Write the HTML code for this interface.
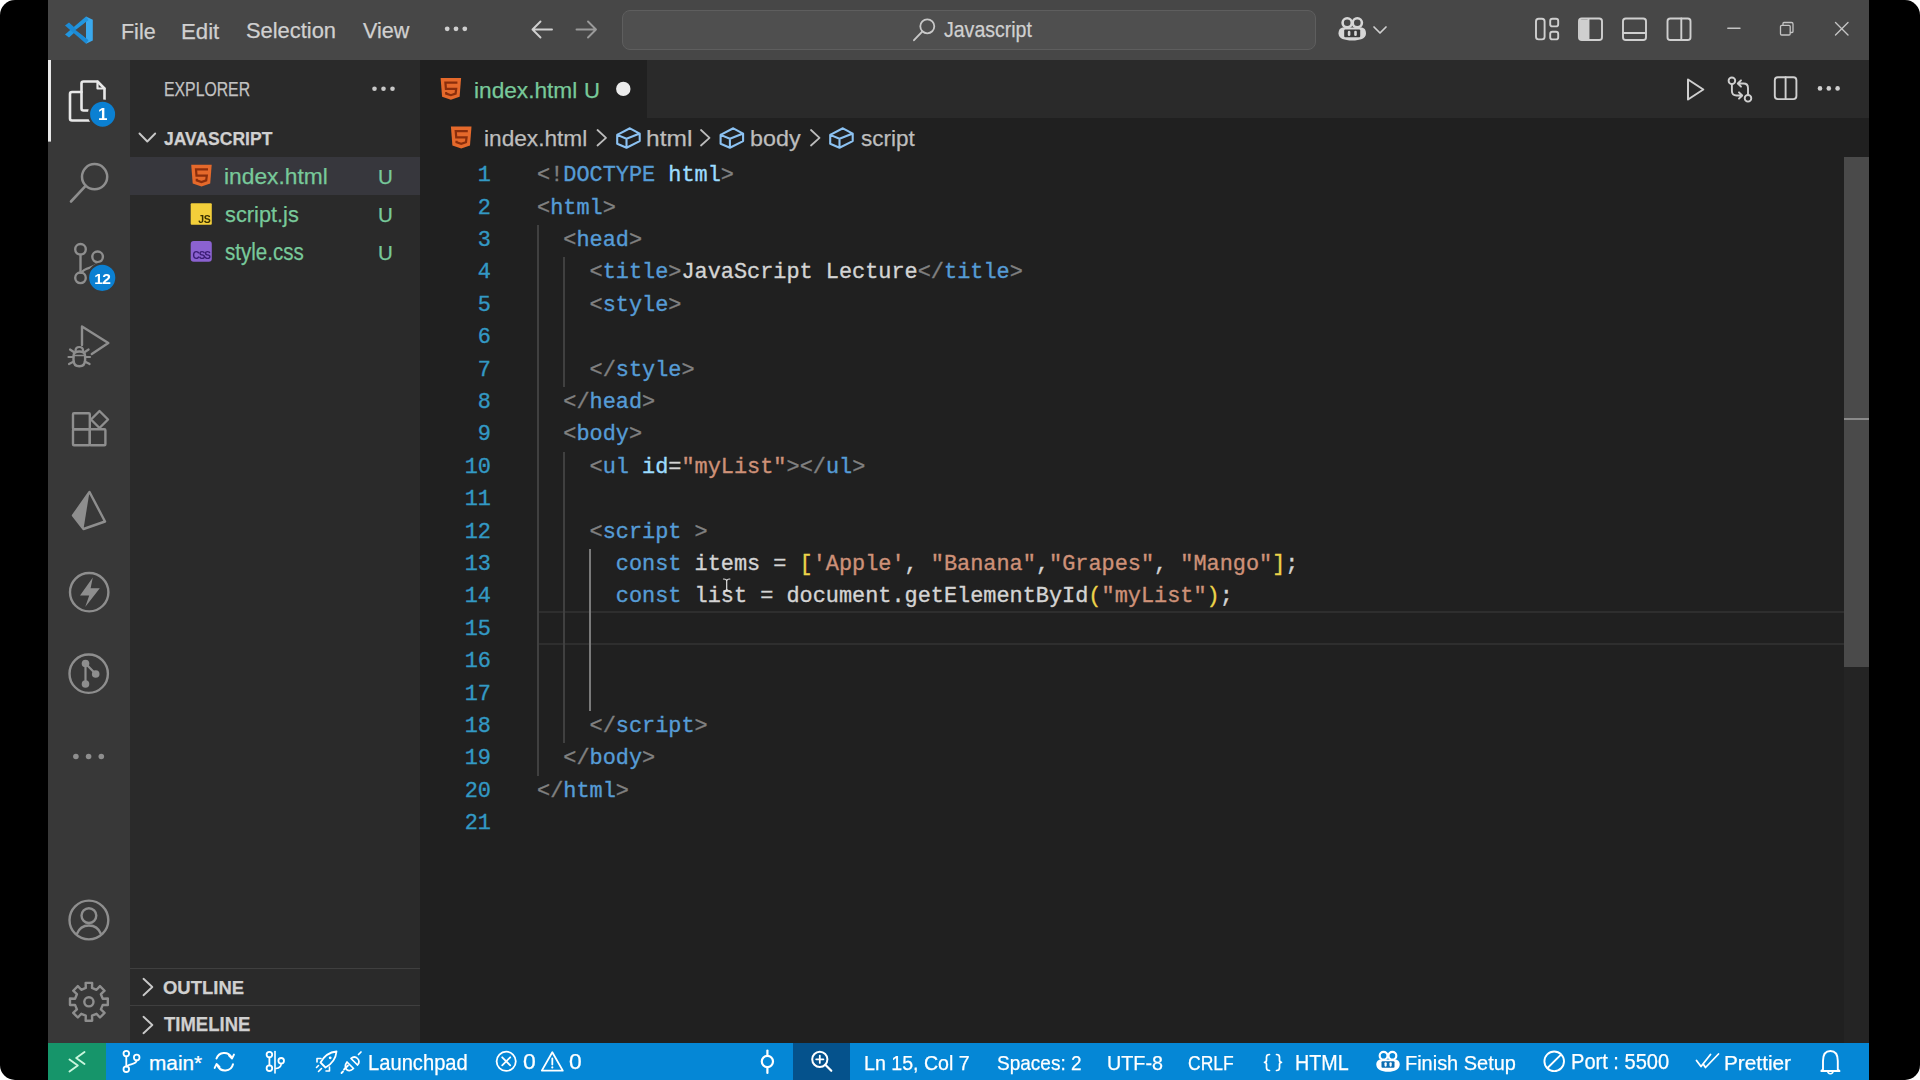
<!DOCTYPE html>
<html><head><meta charset="utf-8">
<style>
*{margin:0;padding:0;box-sizing:border-box}
html,body{width:1920px;height:1080px;overflow:hidden;background:#fff}
body{position:relative;font-family:"Liberation Sans",sans-serif}
.a{position:absolute}
.t{position:absolute;line-height:1;white-space:pre;transform-origin:0 0;-webkit-text-stroke:0.25px currentColor;font-family:"Liberation Sans",sans-serif}
.code{position:absolute;font-family:"Liberation Mono",monospace;font-size:21.88px;line-height:32.40px;white-space:pre;color:#d4d4d4;-webkit-text-stroke:0.35px currentColor}
.ln{position:absolute;font-family:"Liberation Mono",monospace;font-size:21.88px;line-height:32.40px;color:#3399c4;text-align:right;left:431px;width:60px;-webkit-text-stroke:0.35px currentColor}
.guide{position:absolute;width:2px;background:#404040}
.sep{position:absolute;height:1px;background:#3f3f3f}
svg{position:absolute;left:0;top:0}
</style></head><body><div style="position:absolute;left:0;top:0;width:1920px;height:1080px;filter:blur(0.5px)">
<div class="a" style="left:0px;top:0px;width:1920px;height:1080px;background:#000;border-radius:15px"></div><div class="a" style="left:48px;top:0px;width:1821px;height:60px;background:#474747;"></div><div class="a" style="left:48px;top:60px;width:82px;height:983px;background:#383838;"></div><div class="a" style="left:130px;top:60px;width:290px;height:983px;background:#2a2a2a;"></div><div class="a" style="left:420px;top:60px;width:1449px;height:983px;background:#202020;"></div><div class="a" style="left:420px;top:60px;width:1449px;height:58px;background:#2a2a2a;"></div><div class="a" style="left:420px;top:60px;width:227px;height:58px;background:#202020;"></div><div class="a" style="left:48px;top:1043px;width:1821px;height:37px;background:#0587d6;"></div><div class="a" style="left:48px;top:1043px;width:58px;height:37px;background:#16956a;"></div><div class="a" style="left:793px;top:1043px;width:57px;height:37px;background:#05528c;"></div><div class="a" style="left:130px;top:157px;width:290px;height:38px;background:#37373d;"></div><div class="a" style="left:622px;top:10px;width:694px;height:40px;border-radius:8px;background:#4f4f4f;border:1.5px solid #5e5e5e"></div><div class="sep" style="left:130px;top:968px;width:290px"></div><div class="sep" style="left:130px;top:1005px;width:290px"></div><div class="a" style="left:538px;top:611px;width:1306px;height:34px;border-top:2px solid #2e2e2e;border-bottom:2px solid #2e2e2e"></div><div class="guide" style="left:537px;top:225.0px;height:550.8px"></div><div class="guide" style="left:563px;top:257.4px;height:129.6px"></div><div class="guide" style="left:563px;top:451.8px;height:291.6px"></div><div class="guide" style="left:589px;top:549.0px;height:162.0px;background:#7a7a7a"></div><div class="t" style="left:120.98px;top:20.66px;font-size:21.66px;transform:scaleX(0.9920);color:#d0d0d0;">File</div><div class="t" style="left:181.12px;top:20.66px;font-size:21.66px;transform:scaleX(1.0252);color:#d0d0d0;">Edit</div><div class="t" style="left:246.02px;top:20.31px;font-size:22.07px;transform:scaleX(0.9911);color:#d0d0d0;">Selection</div><div class="t" style="left:362.79px;top:20.31px;font-size:22.07px;transform:scaleX(0.9781);color:#d0d0d0;">View</div><div class="t" style="left:943.91px;top:19.81px;font-size:21.24px;transform:scaleX(0.9195);color:#d0d0d0;">Javascript</div><div class="t" style="left:163.73px;top:80.41px;font-size:19.71px;transform:scaleX(0.8028);color:#c2c2c2;">EXPLORER</div><div class="t" style="left:163.94px;top:128.91px;font-size:19.00px;transform:scaleX(0.9219);color:#d0d0d0;font-weight:bold;">JAVASCRIPT</div><div class="t" style="left:223.82px;top:165.96px;font-size:22.48px;transform:scaleX(1.0132);color:#78c99a;">index.html</div><div class="t" style="left:224.95px;top:203.56px;font-size:22.48px;transform:scaleX(0.9698);color:#78c99a;">script.js</div><div class="t" style="left:224.98px;top:240.68px;font-size:23.17px;transform:scaleX(0.8883);color:#78c99a;">style.css</div><div class="t" style="left:378.46px;top:167.81px;font-size:19.71px;transform:scaleX(1.0414);color:#78c99a;">U</div><div class="t" style="left:378.46px;top:205.81px;font-size:19.71px;transform:scaleX(1.0414);color:#78c99a;">U</div><div class="t" style="left:378.46px;top:243.81px;font-size:19.71px;transform:scaleX(1.0414);color:#78c99a;">U</div><div class="t" style="left:163.26px;top:977.61px;font-size:19.00px;transform:scaleX(0.9720);color:#d0d0d0;font-weight:bold;">OUTLINE</div><div class="t" style="left:163.81px;top:1015.19px;font-size:19.86px;transform:scaleX(0.9321);color:#d0d0d0;font-weight:bold;">TIMELINE</div><div class="t" style="left:474.03px;top:79.21px;font-size:22.90px;transform:scaleX(0.9900);color:#78c99a;">index.html</div><div class="t" style="left:584.44px;top:79.70px;font-size:22.32px;transform:scaleX(0.9904);color:#78c99a;">U</div><div class="t" style="left:484.33px;top:128.00px;font-size:22.21px;transform:scaleX(1.0207);color:#bdbdbd;">index.html</div><div class="t" style="left:645.88px;top:127.86px;font-size:22.48px;transform:scaleX(1.0929);color:#bdbdbd;">html</div><div class="t" style="left:750.28px;top:127.86px;font-size:22.48px;transform:scaleX(1.0375);color:#bdbdbd;">body</div><div class="t" style="left:860.62px;top:128.33px;font-size:21.93px;transform:scaleX(1.0264);color:#bdbdbd;">script</div><div class="t" style="left:148.95px;top:1052.90px;font-size:20.55px;transform:scaleX(1.0124);color:#ffffff;">main*</div><div class="t" style="left:367.89px;top:1052.78px;font-size:21.52px;transform:scaleX(0.9372);color:#ffffff;">Launchpad</div><div class="t" style="left:523.28px;top:1052.28px;font-size:21.29px;transform:scaleX(1.0766);color:#ffffff;">0</div><div class="t" style="left:569.39px;top:1052.28px;font-size:21.29px;transform:scaleX(1.0717);color:#ffffff;">0</div><div class="t" style="left:864.03px;top:1053.25px;font-size:20.14px;transform:scaleX(0.9738);color:#ffffff;">Ln 15, Col 7</div><div class="t" style="left:996.64px;top:1052.64px;font-size:20.86px;transform:scaleX(0.9115);color:#ffffff;">Spaces: 2</div><div class="t" style="left:1106.82px;top:1052.64px;font-size:20.86px;transform:scaleX(0.9465);color:#ffffff;">UTF-8</div><div class="t" style="left:1188.33px;top:1052.64px;font-size:20.86px;transform:scaleX(0.8390);color:#ffffff;">CRLF</div><div class="t" style="left:1295.32px;top:1052.01px;font-size:21.59px;transform:scaleX(0.9138);color:#ffffff;">HTML</div><div class="t" style="left:1404.65px;top:1052.90px;font-size:20.55px;transform:scaleX(0.9709);color:#ffffff;">Finish Setup</div><div class="t" style="left:1570.89px;top:1052.25px;font-size:21.43px;transform:scaleX(0.9363);color:#ffffff;">Port : 5500</div><div class="t" style="left:1724.14px;top:1052.88px;font-size:20.69px;transform:scaleX(1.0053);color:#ffffff;">Prettier</div><div class="ln" style="top:160.18px">1</div><div class="code" style="left:537.0px;top:160.18px"><span style="color:#808080">&lt;!</span><span style="color:#569cd6">DOCTYPE</span><span style="color:#d4d4d4"> </span><span style="color:#9cdcfe">html</span><span style="color:#808080">&gt;</span></div><div class="ln" style="top:192.58px">2</div><div class="code" style="left:537.0px;top:192.58px"><span style="color:#808080">&lt;</span><span style="color:#569cd6">html</span><span style="color:#808080">&gt;</span></div><div class="ln" style="top:224.98px">3</div><div class="code" style="left:537.0px;top:224.98px"><span style="color:#d4d4d4">  </span><span style="color:#808080">&lt;</span><span style="color:#569cd6">head</span><span style="color:#808080">&gt;</span></div><div class="ln" style="top:257.38px">4</div><div class="code" style="left:537.0px;top:257.38px"><span style="color:#d4d4d4">    </span><span style="color:#808080">&lt;</span><span style="color:#569cd6">title</span><span style="color:#808080">&gt;</span><span style="color:#d4d4d4">JavaScript Lecture</span><span style="color:#808080">&lt;/</span><span style="color:#569cd6">title</span><span style="color:#808080">&gt;</span></div><div class="ln" style="top:289.78px">5</div><div class="code" style="left:537.0px;top:289.78px"><span style="color:#d4d4d4">    </span><span style="color:#808080">&lt;</span><span style="color:#569cd6">style</span><span style="color:#808080">&gt;</span></div><div class="ln" style="top:322.18px">6</div><div class="ln" style="top:354.58px">7</div><div class="code" style="left:537.0px;top:354.58px"><span style="color:#d4d4d4">    </span><span style="color:#808080">&lt;/</span><span style="color:#569cd6">style</span><span style="color:#808080">&gt;</span></div><div class="ln" style="top:386.98px">8</div><div class="code" style="left:537.0px;top:386.98px"><span style="color:#d4d4d4">  </span><span style="color:#808080">&lt;/</span><span style="color:#569cd6">head</span><span style="color:#808080">&gt;</span></div><div class="ln" style="top:419.38px">9</div><div class="code" style="left:537.0px;top:419.38px"><span style="color:#d4d4d4">  </span><span style="color:#808080">&lt;</span><span style="color:#569cd6">body</span><span style="color:#808080">&gt;</span></div><div class="ln" style="top:451.78px">10</div><div class="code" style="left:537.0px;top:451.78px"><span style="color:#d4d4d4">    </span><span style="color:#808080">&lt;</span><span style="color:#569cd6">ul</span><span style="color:#d4d4d4"> </span><span style="color:#9cdcfe">id</span><span style="color:#d4d4d4">=</span><span style="color:#ce9178">&quot;myList&quot;</span><span style="color:#808080">&gt;</span><span style="color:#808080">&lt;/</span><span style="color:#569cd6">ul</span><span style="color:#808080">&gt;</span></div><div class="ln" style="top:484.18px">11</div><div class="ln" style="top:516.58px">12</div><div class="code" style="left:537.0px;top:516.58px"><span style="color:#d4d4d4">    </span><span style="color:#808080">&lt;</span><span style="color:#569cd6">script</span><span style="color:#808080"> &gt;</span></div><div class="ln" style="top:548.98px">13</div><div class="code" style="left:537.0px;top:548.98px"><span style="color:#d4d4d4">      </span><span style="color:#569cd6">const</span><span style="color:#d4d4d4"> items = </span><span style="color:#edd44a">[</span><span style="color:#ce9178">&#x27;Apple&#x27;</span><span style="color:#d4d4d4">, </span><span style="color:#ce9178">&quot;Banana&quot;</span><span style="color:#d4d4d4">,</span><span style="color:#ce9178">&quot;Grapes&quot;</span><span style="color:#d4d4d4">, </span><span style="color:#ce9178">&quot;Mango&quot;</span><span style="color:#edd44a">]</span><span style="color:#d4d4d4">;</span></div><div class="ln" style="top:581.38px">14</div><div class="code" style="left:537.0px;top:581.38px"><span style="color:#d4d4d4">      </span><span style="color:#569cd6">const</span><span style="color:#d4d4d4"> list = document.getElementById</span><span style="color:#edd44a">(</span><span style="color:#ce9178">&quot;myList&quot;</span><span style="color:#edd44a">)</span><span style="color:#d4d4d4">;</span></div><div class="ln" style="top:613.78px">15</div><div class="ln" style="top:646.18px">16</div><div class="ln" style="top:678.58px">17</div><div class="ln" style="top:710.98px">18</div><div class="code" style="left:537.0px;top:710.98px"><span style="color:#d4d4d4">    </span><span style="color:#808080">&lt;/</span><span style="color:#569cd6">script</span><span style="color:#808080">&gt;</span></div><div class="ln" style="top:743.38px">19</div><div class="code" style="left:537.0px;top:743.38px"><span style="color:#d4d4d4">  </span><span style="color:#808080">&lt;/</span><span style="color:#569cd6">body</span><span style="color:#808080">&gt;</span></div><div class="ln" style="top:775.78px">20</div><div class="code" style="left:537.0px;top:775.78px"><span style="color:#808080">&lt;/</span><span style="color:#569cd6">html</span><span style="color:#808080">&gt;</span></div><div class="ln" style="top:808.18px">21</div><div class="a" style="left:1844px;top:157px;width:25px;height:510px;background:#4a4a4a"></div><div class="a" style="left:1844px;top:667px;width:25px;height:376px;background:#242424"></div><div class="a" style="left:1844px;top:418px;width:25px;height:2px;background:#8a8a8a"></div><svg width="1920" height="1080" viewBox="0 0 1920 1080" fill="none" stroke-linecap="round" stroke-linejoin="round"><g>
<path d="M86 16.5 L92.8 19.8 L92.8 40.5 L86 43.8 Z" fill="#3aa9ee"/>
<path d="M86 16.5 L88.5 20 L69 37.5 L65 34.5 Z" fill="#2196e0"/>
<path d="M86 43.8 L88.5 40.3 L69 22.5 L65 25.5 Z" fill="#1c8bd6"/>
<path d="M86 22 L86 38 L75.5 30 Z" fill="#474747"/>
</g>
<circle cx="447.2" cy="28.8" r="2.4" fill="#cfcfcf"/>
<circle cx="456" cy="28.8" r="2.4" fill="#cfcfcf"/>
<circle cx="464.8" cy="28.8" r="2.4" fill="#cfcfcf"/>
<path d="M552 29.5 H532.5 M540.5 21.5 L532.5 29.5 L540.5 37.5" stroke="#d0d0d0" stroke-width="1.9" fill="none" />
<path d="M576.5 29.5 H596 M588 21.5 L596 29.5 L588 37.5" stroke="#9a9a9a" stroke-width="1.9" fill="none" />
<circle cx="927.3" cy="26.3" r="7.0" stroke="#c8c8c8" stroke-width="1.8" fill="none"/>
<line x1="922.2" y1="31.6" x2="914" y2="40.2" stroke="#c8c8c8" stroke-width="1.9"/>
<path d="M1338.5 33.5 C1338.5 29 1341 27.5 1344 27.5 H1360.5 C1363.5 27.5 1366 29 1366 33.5 C1366 38.5 1360 40.5 1352.2 40.5 C1344.5 40.5 1338.5 38.5 1338.5 33.5 Z" fill="#d6d6d6"/>
<circle cx="1347.2" cy="22.8" r="4.6" stroke="#d6d6d6" stroke-width="2.6" fill="#474747"/>
<circle cx="1357.3" cy="22.8" r="4.6" stroke="#d6d6d6" stroke-width="2.6" fill="#474747"/>
<rect x="1344.2" y="29.6" width="16" height="7.6" rx="1" fill="#3a3a3a"/>
<rect x="1347.8" y="30.8" width="2.6" height="5.2" rx="1.3" fill="#d6d6d6"/>
<rect x="1354.2" y="30.8" width="2.6" height="5.2" rx="1.3" fill="#d6d6d6"/>
<path d="M1374 27 L1380 33 L1386 27" stroke="#cfcfcf" stroke-width="1.7" fill="none" />
<rect x="1536" y="18.8" width="8.6" height="20.6" rx="2.6" stroke="#cfcfcf" stroke-width="1.9" fill="none"/>
<rect x="1550.2" y="18.8" width="8" height="7.6" rx="2.2" stroke="#cfcfcf" stroke-width="1.9" fill="none"/>
<rect x="1550.2" y="31.8" width="8" height="7.6" rx="2.2" stroke="#cfcfcf" stroke-width="1.9" fill="none"/>
<rect x="1579" y="18.5" width="23" height="21.5" rx="2.8" stroke="#cfcfcf" stroke-width="1.9" fill="none"/>
<path d="M1580 19.5 H1588.5 V39 H1580 Z" fill="#cfcfcf"/>
<line x1="1588.5" y1="19" x2="1588.5" y2="39.5" stroke="#cfcfcf" stroke-width="1.9"/>
<rect x="1623" y="18.5" width="23" height="21.5" rx="2.8" stroke="#cfcfcf" stroke-width="1.9" fill="none"/>
<line x1="1623" y1="33" x2="1646" y2="33" stroke="#cfcfcf" stroke-width="1.9"/>
<rect x="1667.5" y="18.5" width="23" height="21.5" rx="2.8" stroke="#cfcfcf" stroke-width="1.9" fill="none"/>
<line x1="1681.3" y1="18.5" x2="1681.3" y2="40" stroke="#cfcfcf" stroke-width="1.9"/>
<line x1="1727.8" y1="28.2" x2="1740" y2="28.2" stroke="#c4c4c4" stroke-width="1.4"/>
<path d="M1783 25 V23.5 Q1783 22.5 1784 22.5 H1791.5 Q1793 22.5 1793 24 V31.5 Q1793 32.5 1792 32.5 H1790.5" stroke="#c4c4c4" stroke-width="1.3" fill="none"/>
<rect x="1780.5" y="25.3" width="9.7" height="9.7" rx="1.2" stroke="#c4c4c4" stroke-width="1.3" fill="none"/>
<line x1="1835.5" y1="22.5" x2="1848" y2="35" stroke="#c4c4c4" stroke-width="1.4"/>
<line x1="1848" y1="22.5" x2="1835.5" y2="35" stroke="#c4c4c4" stroke-width="1.4"/>
<rect x="48" y="60" width="3" height="81.6" fill="#e8e8e8"/>
<path d="M81.5 83.5 Q81.5 81.5 83.5 81.5 H97.5 L104.5 88.5 V108.5 Q104.5 110.5 102.5 110.5 H83.5 Q81.5 110.5 81.5 108.5 Z" stroke="#e8e8e8" stroke-width="2.6" fill="none" />
<path d="M97.5 81.5 V88.5 H104.5" stroke="#e8e8e8" stroke-width="2.2" fill="none" />
<path d="M81.5 92 H72 Q70 92 70 94 V118.5 Q70 120.5 72 120.5 H92.5 Q94.5 120.5 94.5 118.5 V110.5" stroke="#e8e8e8" stroke-width="2.6" fill="none" />
<circle cx="102.6" cy="114.2" r="13.6" stroke="#383838" stroke-width="2.2" fill="#0b80d2"/>
<text x="102.7" y="120.2" text-anchor="middle" font-family="Liberation Sans" font-weight="bold" font-size="17" fill="#fff">1</text>
<circle cx="94.6" cy="176.7" r="12.6" stroke="#8e8e8e" stroke-width="2.5" fill="none"/>
<line x1="85.6" y1="185.8" x2="71" y2="201.5" stroke="#8e8e8e" stroke-width="2.6"/>
<circle cx="80.5" cy="249.3" r="5.3" stroke="#8e8e8e" stroke-width="2.4" fill="none"/>
<circle cx="97.6" cy="256.8" r="5.3" stroke="#8e8e8e" stroke-width="2.4" fill="none"/>
<circle cx="80.5" cy="277.8" r="5.3" stroke="#8e8e8e" stroke-width="2.4" fill="none"/>
<line x1="80.5" y1="254.6" x2="80.5" y2="272.5" stroke="#8e8e8e" stroke-width="2.4"/>
<path d="M97.6 262.1 C97.6 268.5 84 266.5 81.5 272.8" stroke="#8e8e8e" stroke-width="2.4" fill="none" />
<circle cx="102.2" cy="277.8" r="14.2" stroke="#383838" stroke-width="2.2" fill="#0b80d2"/>
<text x="102.2" y="283.6" text-anchor="middle" font-family="Liberation Sans" font-weight="bold" font-size="15.5" fill="#fff" letter-spacing="-0.8">12</text>
<path d="M82 345 V326.5 L108.3 343 L91.8 354" stroke="#8e8e8e" stroke-width="2.4" fill="none" />
<path d="M73.5 356 Q73.5 351.5 79.3 351.5 Q85.1 351.5 85.1 356 V360 Q85.1 366.2 79.3 366.2 Q73.5 366.2 73.5 360 Z" stroke="#8e8e8e" stroke-width="2.4" fill="none"/>
<path d="M75.5 351 Q75.5 347 79.3 347 Q83.1 347 83.1 351" stroke="#8e8e8e" stroke-width="2.2" fill="none" />
<line x1="68.5" y1="357" x2="73.5" y2="357" stroke="#8e8e8e" stroke-width="2.2"/>
<line x1="85.1" y1="357" x2="90" y2="357" stroke="#8e8e8e" stroke-width="2.2"/>
<line x1="69" y1="364" x2="73.8" y2="361.5" stroke="#8e8e8e" stroke-width="2.2"/>
<line x1="84.8" y1="361.5" x2="89.6" y2="364" stroke="#8e8e8e" stroke-width="2.2"/>
<line x1="70" y1="349.5" x2="74.5" y2="352.5" stroke="#8e8e8e" stroke-width="2.2"/>
<line x1="84.1" y1="352.5" x2="88.6" y2="349.5" stroke="#8e8e8e" stroke-width="2.2"/>
<line x1="73.8" y1="355.5" x2="84.8" y2="355.5" stroke="#8e8e8e" stroke-width="1.6"/>
<rect x="73" y="413.2" width="16.8" height="16" rx="1" stroke="#8e8e8e" stroke-width="2.4" fill="none"/>
<rect x="73" y="429.2" width="16.8" height="16" rx="1" stroke="#8e8e8e" stroke-width="2.4" fill="none"/>
<rect x="89.8" y="429.2" width="15.6" height="16" rx="1" stroke="#8e8e8e" stroke-width="2.4" fill="none"/>
<path d="M99.5 411 L108 419.5 L99.5 428 L91 419.5 Z" stroke="#8e8e8e" stroke-width="2.4" fill="none" />
<path d="M89.5 492 L73 515.5 L83.5 529 L105 521.5 Z" stroke="#8e8e8e" stroke-width="2.4" fill="none"/>
<path d="M89.5 492 L73 515.5 L83.5 529 Z" fill="#8e8e8e"/>
<circle cx="89.2" cy="592.2" r="19.2" stroke="#8e8e8e" stroke-width="2.4" fill="none"/>
<path d="M92.8 577.5 L80 595.5 H89.2 L85.2 607 L99.8 588.2 H90.6 Z" fill="#8e8e8e"/>
<circle cx="88.7" cy="673.7" r="19.2" stroke="#8e8e8e" stroke-width="2.4" fill="none"/>
<circle cx="85.5" cy="663.5" r="3.8" fill="#8e8e8e"/>
<circle cx="95.7" cy="674" r="3.8" fill="#8e8e8e"/>
<circle cx="85.5" cy="684" r="3.8" fill="#8e8e8e"/>
<line x1="85.5" y1="663.5" x2="85.5" y2="684" stroke="#8e8e8e" stroke-width="2.2"/>
<line x1="85.5" y1="663.5" x2="95.7" y2="674" stroke="#8e8e8e" stroke-width="2.2"/>
<circle cx="75.9" cy="756.5" r="2.8" fill="#8e8e8e"/>
<circle cx="88.6" cy="756.5" r="2.8" fill="#8e8e8e"/>
<circle cx="101.3" cy="756.5" r="2.8" fill="#8e8e8e"/>
<circle cx="88.9" cy="920" r="19.4" stroke="#8e8e8e" stroke-width="2.4" fill="none"/>
<circle cx="88.9" cy="915.6" r="7.4" stroke="#8e8e8e" stroke-width="2.4" fill="none"/>
<path d="M76.8 934 C79 928.5 83.5 925.5 88.9 925.5 C94.3 925.5 98.8 928.5 101 934" stroke="#8e8e8e" stroke-width="2.4" fill="none" />
<path d="M85.79 987.94 L85.64 982.88 L92.16 982.88 L92.01 987.94 L96.50 989.80 L99.97 986.12 L104.58 990.73 L100.90 994.20 L102.76 998.69 L107.82 998.54 L107.82 1005.06 L102.76 1004.91 L100.90 1009.40 L104.58 1012.87 L99.97 1017.48 L96.50 1013.80 L92.01 1015.66 L92.16 1020.72 L85.64 1020.72 L85.79 1015.66 L81.30 1013.80 L77.83 1017.48 L73.22 1012.87 L76.90 1009.40 L75.04 1004.91 L69.98 1005.06 L69.98 998.54 L75.04 998.69 L76.90 994.20 L73.22 990.73 L77.83 986.12 L81.30 989.80 Z" stroke="#8e8e8e" stroke-width="2.4" fill="none" />
<circle cx="88.9" cy="1001.8" r="4.6" stroke="#8e8e8e" stroke-width="2.4" fill="none"/>
<circle cx="374.5" cy="88.8" r="2.3" fill="#c8c8c8"/>
<circle cx="383.5" cy="88.8" r="2.3" fill="#c8c8c8"/>
<circle cx="392.5" cy="88.8" r="2.3" fill="#c8c8c8"/>
<path d="M139.5 133.5 L147.3 141.5 L155.2 133.5" stroke="#c8c8c8" stroke-width="1.9" fill="none" />
<path d="M143.5 978.8 L152.3 987 L143.5 995.2" stroke="#c8c8c8" stroke-width="1.9" fill="none" />
<path d="M143.5 1016.8 L152.3 1025 L143.5 1033.2" stroke="#c8c8c8" stroke-width="1.9" fill="none" />
<path d="M191.20 164.80 H211.70 L210.20 183.60 L201.45 186.60 L192.70 183.60 Z" fill="#e5692b"/>
<path d="M208.00 169.40 H196.00 L196.50 175.60 H206.80 L206.20 180.40 L201.45 182.00 L196.80 180.40 V178.80" stroke="#8a2e0c" stroke-width="2.20" fill="none" stroke-linecap="butt" stroke-linejoin="miter"/>
<path d="M440.60 78.00 H461.10 L459.60 96.80 L450.85 99.80 L442.10 96.80 Z" fill="#e5692b"/>
<path d="M457.40 82.60 H445.40 L445.90 88.80 H456.20 L455.60 93.60 L450.85 95.20 L446.20 93.60 V92.00" stroke="#8a2e0c" stroke-width="2.20" fill="none" stroke-linecap="butt" stroke-linejoin="miter"/>
<path d="M450.90 126.50 H471.50 L469.99 145.47 L461.20 148.50 L452.41 145.47 Z" fill="#e5692b"/>
<path d="M467.78 131.14 H455.72 L456.23 137.40 H466.58 L465.97 142.24 L461.20 143.86 L456.53 142.24 V140.63" stroke="#8a2e0c" stroke-width="2.21" fill="none" stroke-linecap="butt" stroke-linejoin="miter"/>
<rect x="190.7" y="203.3" width="21.1" height="21.4" rx="1" fill="#f3cf3a"/>
<text x="210.5" y="222.6" text-anchor="end" font-family="Liberation Sans" font-weight="bold" font-size="10.5" fill="#3a3000" letter-spacing="-0.3">JS</text>
<rect x="190.7" y="241" width="21.1" height="20.8" rx="3" fill="#8b62d0"/>
<text x="201.2" y="259" text-anchor="middle" font-family="Liberation Sans" font-weight="bold" font-size="10" fill="#3b1d75" letter-spacing="-1">CSS</text>
<circle cx="623.3" cy="88.9" r="7.2" fill="#ececec"/>
<path d="M597.5 130 L606.0 137.8 L597.5 145.5" stroke="#bdbdbd" stroke-width="1.8" fill="none" />
<path d="M701 130 L709.5 137.8 L701 145.5" stroke="#bdbdbd" stroke-width="1.8" fill="none" />
<path d="M811 130 L819.5 137.8 L811 145.5" stroke="#bdbdbd" stroke-width="1.8" fill="none" />
<path d="M617.20 134.90 L629.90 128.30 L639.70 133.60 L639.70 141.10 L626.50 147.70 L617.20 143.70 Z M617.20 134.90 L626.50 138.80 L639.70 133.60 M626.50 138.80 V147.7" stroke="#8cc2f2" stroke-width="2.1" fill="none" />
<path d="M720.60 134.90 L733.30 128.30 L743.10 133.60 L743.10 141.10 L729.90 147.70 L720.60 143.70 Z M720.60 134.90 L729.90 138.80 L743.10 133.60 M729.90 138.80 V147.7" stroke="#8cc2f2" stroke-width="2.1" fill="none" />
<path d="M830.20 134.90 L842.90 128.30 L852.70 133.60 L852.70 141.10 L839.50 147.70 L830.20 143.70 Z M830.20 134.90 L839.50 138.80 L852.70 133.60 M839.50 138.80 V147.7" stroke="#8cc2f2" stroke-width="2.1" fill="none" />
<path d="M1688 79.5 L1703.3 89.5 L1688 99.5 Z" stroke="#cfcfcf" stroke-width="2" fill="none" />
<circle cx="1731.9" cy="80.8" r="3.3" stroke="#cfcfcf" stroke-width="1.9" fill="none"/>
<circle cx="1748" cy="98.3" r="3.3" stroke="#cfcfcf" stroke-width="1.9" fill="none"/>
<path d="M1731.9 84.1 V91 Q1731.9 95.5 1736.5 95.5 H1742 M1739 92.3 L1742.2 95.5 L1739 98.7" stroke="#cfcfcf" stroke-width="1.9" fill="none" />
<path d="M1748 95 V88 Q1748 83.5 1743.5 83.5 H1738 M1741 80.3 L1737.8 83.5 L1741 86.7" stroke="#cfcfcf" stroke-width="1.9" fill="none" />
<rect x="1774.8" y="77.3" width="21.6" height="21.8" rx="3" stroke="#cfcfcf" stroke-width="1.9" fill="none"/>
<line x1="1785.6" y1="77.3" x2="1785.6" y2="99" stroke="#cfcfcf" stroke-width="1.9"/>
<circle cx="1820" cy="88.4" r="2.3" fill="#cfcfcf"/>
<circle cx="1828.8" cy="88.4" r="2.3" fill="#cfcfcf"/>
<circle cx="1837.6" cy="88.4" r="2.3" fill="#cfcfcf"/>
<path d="M723.5 579 Q726.7 579 726.7 581 V589 Q726.7 591 723.5 591 M729.9 579 Q726.7 579 726.7 581 M729.9 591 Q726.7 591 726.7 589" stroke="#e0e0e0" stroke-width="1.2" fill="none" />
<path d="M69.5 1059.5 L77.8 1065.5 L69.5 1071.5" stroke="#c9f6dd" stroke-width="1.9" fill="none" />
<path d="M84.5 1052 L76.2 1058 L84.5 1064" stroke="#c9f6dd" stroke-width="1.9" fill="none" />
<circle cx="126.3" cy="1053.6" r="2.8" stroke="#ffffff" stroke-width="1.8" fill="none"/>
<circle cx="126.3" cy="1069.2" r="2.8" stroke="#ffffff" stroke-width="1.8" fill="none"/>
<circle cx="136.7" cy="1057.5" r="2.8" stroke="#ffffff" stroke-width="1.8" fill="none"/>
<line x1="126.3" y1="1056.4" x2="126.3" y2="1066.4" stroke="#ffffff" stroke-width="1.8"/>
<path d="M136.7 1060.3 C136.7 1065 128 1063.5 126.6 1066.5" stroke="#ffffff" stroke-width="1.8" fill="none" />
<path d="M216.5 1058.5 A8.2 8.2 0 0 1 231.5 1057.2 M233 1064.2 A8.2 8.2 0 0 1 217.5 1065.5" stroke="#ffffff" stroke-width="2" fill="none" />
<path d="M229 1055.5 L232 1058.5 L234 1054.5" stroke="#ffffff" stroke-width="1.8" fill="none" />
<path d="M219.6 1067 L216.6 1064 L214.6 1068" stroke="#ffffff" stroke-width="1.8" fill="none" />
<circle cx="269.4" cy="1054.6" r="2.8" stroke="#ffffff" stroke-width="1.8" fill="none"/>
<circle cx="269.4" cy="1068.2" r="2.8" stroke="#ffffff" stroke-width="1.8" fill="none"/>
<circle cx="281.2" cy="1060.8" r="2.8" stroke="#ffffff" stroke-width="1.8" fill="none"/>
<line x1="269.4" y1="1057.4" x2="269.4" y2="1065.4" stroke="#ffffff" stroke-width="1.8"/>
<line x1="275" y1="1051.5" x2="275" y2="1073" stroke="#ffffff" stroke-width="1.6"/>
<path d="M281.2 1063.6 Q281.2 1068 276 1068.5" stroke="#ffffff" stroke-width="1.6" fill="none" />
<path d="M336.5 1051.5 Q326 1052.5 320.5 1062.5 L325.5 1067.5 Q335.5 1062 336.5 1051.5 Z" stroke="#ffffff" stroke-width="1.8" fill="none" />
<path d="M321 1058.5 L317 1058.5 L317 1062 M329.5 1067 V1071 H326" stroke="#ffffff" stroke-width="1.6" fill="none" />
<path d="M316.5 1067.5 L318.5 1065.5 M318.5 1071.5 L321.5 1068.5" stroke="#ffffff" stroke-width="1.6" fill="none" />
<circle cx="330.2" cy="1057.8" r="1.4" fill="#ffffff"/>
<path d="M344 1069.5 L348 1065.5 M343 1071.5 L341.5 1073" stroke="#ffffff" stroke-width="1.8" fill="none" />
<path d="M347 1062 L353.5 1068.5 Q350 1072 346.5 1069.5 Q344 1066 347 1062 Z" stroke="#ffffff" stroke-width="1.7" fill="none" />
<path d="M351 1058.5 Q354.5 1055.5 357.5 1058.5 Q360.5 1061.5 357.5 1065 Z" stroke="#ffffff" stroke-width="1.7" fill="none" />
<line x1="358.5" y1="1054.5" x2="361" y2="1052" stroke="#ffffff" stroke-width="1.7"/>
<circle cx="506.2" cy="1061.3" r="9.6" stroke="#ffffff" stroke-width="1.8" fill="none"/>
<line x1="502.2" y1="1057.3" x2="510.2" y2="1065.3" stroke="#ffffff" stroke-width="1.8"/>
<line x1="510.2" y1="1057.3" x2="502.2" y2="1065.3" stroke="#ffffff" stroke-width="1.8"/>
<path d="M552.3 1052.2 L562.8 1070.6 H541.8 Z" stroke="#ffffff" stroke-width="1.8" fill="none" />
<line x1="552.3" y1="1058.5" x2="552.3" y2="1064.5" stroke="#ffffff" stroke-width="1.8"/>
<circle cx="552.3" cy="1067.4" r="1.1" fill="#ffffff"/>
<circle cx="767.4" cy="1061.5" r="5.6" stroke="#ffffff" stroke-width="2.2" fill="none"/>
<line x1="767.4" y1="1050.5" x2="767.4" y2="1055.9" stroke="#ffffff" stroke-width="2.2"/>
<line x1="767.4" y1="1067.1" x2="767.4" y2="1073" stroke="#ffffff" stroke-width="2.2"/>
<circle cx="819.8" cy="1059.3" r="7.6" stroke="#ffffff" stroke-width="2" fill="none"/>
<line x1="825.3" y1="1064.8" x2="831.3" y2="1070.8" stroke="#ffffff" stroke-width="2.2"/>
<line x1="816.2" y1="1059.3" x2="823.4" y2="1059.3" stroke="#ffffff" stroke-width="1.8"/>
<line x1="819.8" y1="1055.7" x2="819.8" y2="1062.9" stroke="#ffffff" stroke-width="1.8"/>
<path d="M1269.5 1054.5 Q1266.5 1054.5 1266.5 1057 V1060 Q1266.5 1062.3 1264.5 1062.3 Q1266.5 1062.3 1266.5 1064.6 V1067.8 Q1266.5 1070.5 1269.5 1070.5" stroke="#ffffff" stroke-width="1.7" fill="none" />
<path d="M1276.5 1054.5 Q1279.5 1054.5 1279.5 1057 V1060 Q1279.5 1062.3 1281.5 1062.3 Q1279.5 1062.3 1279.5 1064.6 V1067.8 Q1279.5 1070.5 1276.5 1070.5" stroke="#ffffff" stroke-width="1.7" fill="none" />
<path d="M1376.3 1064.5 C1376.3 1061 1378.5 1059.5 1381 1059.5 H1395 C1397.5 1059.5 1399.7 1061 1399.7 1064.5 C1399.7 1069.5 1394.5 1071.8 1388 1071.8 C1381.5 1071.8 1376.3 1069.5 1376.3 1064.5 Z" fill="#ffffff"/>
<circle cx="1383.6" cy="1055.8" r="3.9" stroke="#ffffff" stroke-width="2.2" fill="#0587d6"/>
<circle cx="1392.4" cy="1055.8" r="3.9" stroke="#ffffff" stroke-width="2.2" fill="#0587d6"/>
<rect x="1381.5" y="1061.2" width="13" height="6.5" rx="1" fill="#0a6db2"/>
<rect x="1384.5" y="1062.2" width="2.2" height="4.5" rx="1.1" fill="#fff"/>
<rect x="1389.5" y="1062.2" width="2.2" height="4.5" rx="1.1" fill="#fff"/>
<circle cx="1554.2" cy="1061.3" r="9.8" stroke="#ffffff" stroke-width="1.9" fill="none"/>
<line x1="1547.5" y1="1068" x2="1561" y2="1054.6" stroke="#ffffff" stroke-width="1.9"/>
<path d="M1696.5 1060.5 L1701 1066.5 L1710.5 1054.5 M1703.5 1064.5 L1705.5 1067.5 L1718.5 1054" stroke="#ffffff" stroke-width="1.8" fill="none" />
<path d="M1823 1069.5 V1061 Q1823 1051 1830.4 1051 Q1837.8 1051 1837.8 1061 V1069.5 L1839.5 1071 H1821.3 Z" stroke="#ffffff" stroke-width="1.9" fill="none" />
<path d="M1828 1072.5 Q1830.4 1075 1832.8 1072.5" stroke="#ffffff" stroke-width="1.7" fill="none" /></svg></div></body></html>
